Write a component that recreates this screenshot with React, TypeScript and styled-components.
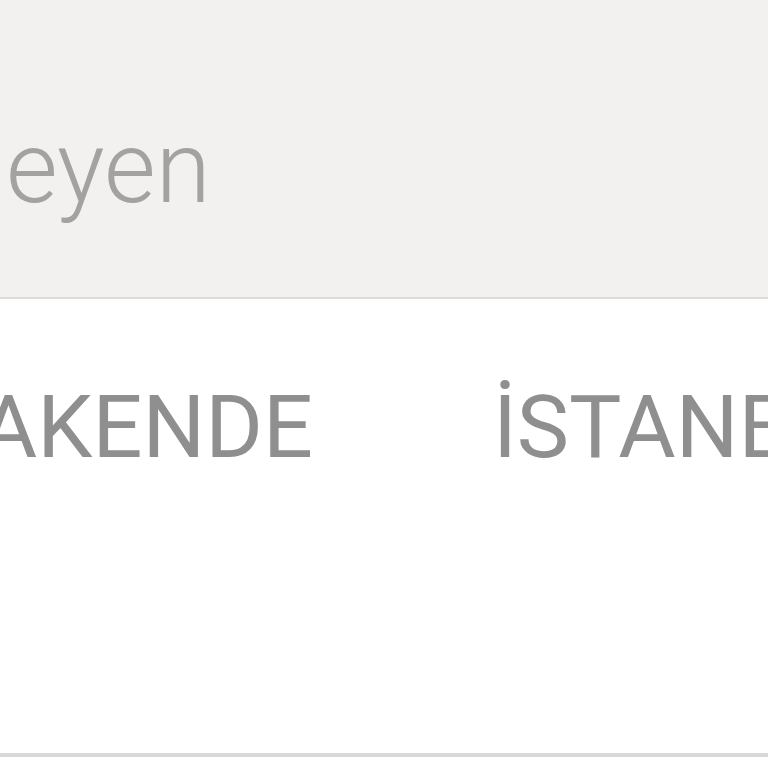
import React from "react";
import styled, { createGlobalStyle } from "styled-components";

const Global = createGlobalStyle`
  html, body { margin: 0; padding: 0; background: #ffffff; }
  body { font-family: Roboto, "Noto Sans", sans-serif; overflow: hidden; }
  * { box-sizing: border-box; }
`;

const Screen = styled.div`
  width: 768px;
  height: 768px;
  overflow: hidden;
  display: flex;
  flex-direction: column;
  background: #ffffff;
`;

const SearchBar = styled.div`
  height: 299px;
  flex: none;
  background: #f2f1f0;
  border-bottom: 2px solid #dddcdb;
  padding: 118px 0 0 6px;
`;

const Placeholder = styled.div`
  font-family: Roboto, sans-serif;
  font-weight: 300;
  font-size: 100px;
  line-height: 100px;
  color: #a2a2a2;
  white-space: nowrap;
`;

const Tabs = styled.div`
  height: 458px;
  flex: none;
  display: flex;
  align-items: flex-start;
  padding-top: 84px;
  gap: 180px;
  border-bottom: 4px solid #d9d9d9;
  white-space: nowrap;
`;

const Tab = styled.div<{ $shift?: number }>`
  flex: none;
  margin-left: ${(p) => p.$shift ?? 0}px;
  font-family: Roboto, sans-serif;
  font-weight: 400;
  font-size: 88px;
  line-height: 88px;
  color: #8f8f8f;
  text-transform: uppercase;
`;

export default function App() {
  return (
    <>
      <Global />
      <Screen>
        <SearchBar>
          <Placeholder>eyen</Placeholder>
        </SearchBar>
        <Tabs>
          <Tab $shift={-180}>PERAKENDE</Tab>
          <Tab>İSTANBUL</Tab>
        </Tabs>
      </Screen>
    </>
  );
}
